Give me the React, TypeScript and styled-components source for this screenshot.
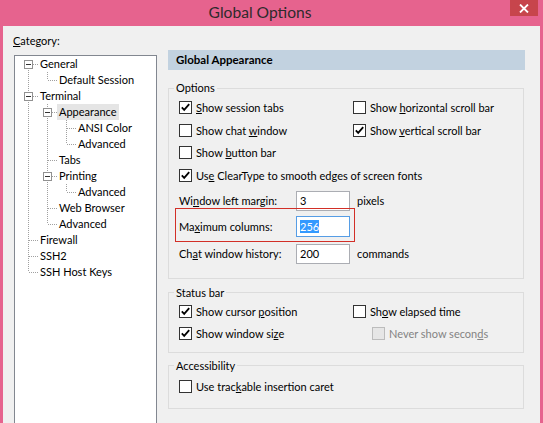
import React from 'react';
import styled, { createGlobalStyle } from 'styled-components';

const GlobalStyle = createGlobalStyle`
  html, body {
    margin: 0;
    padding: 0;
  }

  body {
    background: #e6638e;
    font-family: Lato, "Noto Sans", sans-serif;
    font-size: 11px;
    color: #000;
  }
`;

const Window = styled.div`
  width: 543px;
  height: 423px;
  overflow: hidden;
  background: #e6638e;
  display: flex;
  flex-direction: column;
`;

const TitleBar = styled.div`
  height: 26px;
  flex-shrink: 0;
  display: grid;
  grid-template-columns: 1fr auto;
`;

const Title = styled.div`
  padding-left: 10px;
  text-align: center;
  font-size: 15.6px;
  line-height: 24px;
  color: #2e2a2c;
`;

const CloseButton = styled.div`
  width: 28px;
  height: 16px;
  margin-right: 5px;
  background: #c7454c;
  display: flex;
  align-items: center;
  justify-content: center;
`;

const Body = styled.div`
  flex: 1;
  min-height: 0;
  margin: 0 3px;
  background: #f0f0f0;
  display: flex;
`;

const Sidebar = styled.div`
  width: 143px;
  padding-left: 11px;
  display: flex;
  flex-direction: column;
  flex-shrink: 0;
`;

const CategoryLabel = styled.div`
  margin: 7px 0 7px -1px;
  line-height: 15px;
`;

const Tree = styled.div`
  height: 380px;
  flex-shrink: 0;
  background: #fff;
  border: 1px solid #828790;
  padding: 0 0 0 4px;
`;

const TreeRow = styled.div`
  display: flex;
  height: 16px;
  align-items: center;
`;

const TreeLabel = styled.span<{ $selected?: boolean }>`
  padding: 0 2px;
  line-height: 16px;
  white-space: nowrap;
  background: ${(p) => (p.$selected ? '#e5e5e5' : 'transparent')};
`;

const Main = styled.div`
  flex: 1;
  min-width: 0;
  padding: 24px 15px 0 11px;
  display: flex;
  flex-direction: column;
`;

const Header = styled.div`
  height: 20px;
  background: #c2d2e0;
  padding-left: 8px;
  font-weight: 700;
  font-size: 11.5px;
  line-height: 20px;
`;

const Group = styled.fieldset<{ $mt: number }>`
  margin: ${(p) => p.$mt}px 1px 0 0;
  padding: 0;
  border: 1px solid #dcdcdc;
  min-width: 0;
`;

const Legend = styled.legend`
  margin-left: 5px;
  padding: 0 2px;
  line-height: 14px;
`;

const GroupContent = styled.div<{ $pt: number; $pb: number }>`
  padding: ${(p) => p.$pt}px 0 ${(p) => p.$pb}px 10px;
`;

const CheckGrid = styled.div<{ $rowH: number }>`
  display: grid;
  grid-template-columns: 174px 1fr;
  grid-auto-rows: ${(p) => p.$rowH}px;
  align-items: center;
`;

const CheckLabel = styled.label<{ $disabled?: boolean; $indent?: number; $span?: boolean }>`
  display: flex;
  align-items: center;
  gap: 4px;
  margin-left: ${(p) => p.$indent ?? 0}px;
  color: ${(p) => (p.$disabled ? '#838383' : '#000')};
  grid-column: ${(p) => (p.$span ? '1 / span 2' : 'auto')};
  white-space: nowrap;
`;

const Box = styled.span<{ $disabled?: boolean }>`
  width: 13px;
  height: 13px;
  box-sizing: border-box;
  border: 1px solid ${(p) => (p.$disabled ? '#bcbcbc' : '#333')};
  background: ${(p) => (p.$disabled ? '#e6e6e6' : '#fff')};
  display: flex;
  flex-shrink: 0;
`;

const FieldRow = styled.div<{ $mt: number; $highlight?: boolean }>`
  display: grid;
  grid-template-columns: ${(p) => (p.$highlight ? '110px 54px' : '110px 54px auto')};
  column-gap: 7px;
  align-items: center;
  width: max-content;
  margin-top: ${(p) => p.$mt}px;
  position: relative;

  &::after {
    content: '';
    display: ${(p) => (p.$highlight ? 'block' : 'none')};
    position: absolute;
    top: -8px;
    bottom: -5px;
    left: -4px;
    right: -5px;
    border: 1.5px solid #d22f27;
  }
`;

const TextBox = styled.div<{ $focused?: boolean; $h: number }>`
  height: ${(p) => p.$h}px;
  box-sizing: border-box;
  border: 1px solid ${(p) => (p.$focused ? '#569de5' : '#abadb3')};
  background: #fff;
  padding: 0 3px;
  display: flex;
  align-items: center;
`;

const Selected = styled.span`
  background: #3399ff;
  color: #fff;
`;

type TreeNode = {
  label: string;
  guides: boolean[];
  up: boolean;
  down: boolean;
  expander?: boolean;
  selected?: boolean;
};

const nodes: TreeNode[] = [
  { label: 'General', guides: [], up: false, down: true, expander: true },
  { label: 'Default Session', guides: [true], up: true, down: false },
  { label: 'Terminal', guides: [], up: true, down: true, expander: true },
  { label: 'Appearance', guides: [true], up: true, down: true, expander: true, selected: true },
  { label: 'ANSI Color', guides: [true, true], up: true, down: true },
  { label: 'Advanced', guides: [true, true], up: true, down: false },
  { label: 'Tabs', guides: [true], up: true, down: true },
  { label: 'Printing', guides: [true], up: true, down: true, expander: true },
  { label: 'Advanced', guides: [true, true], up: true, down: false },
  { label: 'Web Browser', guides: [true], up: true, down: true },
  { label: 'Advanced', guides: [true], up: true, down: false },
  { label: 'Firewall', guides: [], up: true, down: true },
  { label: 'SSH2', guides: [], up: true, down: true },
  { label: 'SSH Host Keys', guides: [], up: true, down: false },
];

const DOT = '#a0a0a0';

const LineCell = styled.svg`
  flex-shrink: 0;
`;

const Guide = ({ pipe }: { pipe: boolean }) => (
  <LineCell width="19" height="16">
    {pipe && <line x1="9.5" y1="0" x2="9.5" y2="16" stroke={DOT} strokeDasharray="1 1" />}
  </LineCell>
);

const Connector = ({ up, down, expander }: { up: boolean; down: boolean; expander?: boolean }) => (
  <LineCell width="19" height="16">
    {up && <line x1="9.5" y1="0" x2="9.5" y2="8" stroke={DOT} strokeDasharray="1 1" />}
    {down && <line x1="9.5" y1="8" x2="9.5" y2="16" stroke={DOT} strokeDasharray="1 1" />}
    <line x1="10" y1="8.5" x2="19" y2="8.5" stroke={DOT} strokeDasharray="1 1" />
    {expander && (
      <>
        <rect x="5.5" y="4.5" width="8" height="8" fill="#fff" stroke="#919191" />
        <line x1="7" y1="8.5" x2="12" y2="8.5" stroke="#333" />
      </>
    )}
  </LineCell>
);

const Check = ({
  checked,
  disabled,
  indent,
  span,
  children,
}: {
  checked?: boolean;
  disabled?: boolean;
  indent?: number;
  span?: boolean;
  children: React.ReactNode;
}) => (
  <CheckLabel $disabled={disabled} $indent={indent} $span={span}>
    <Box $disabled={disabled}>
      {checked && (
        <svg width="11" height="11" viewBox="0 0 11 11">
          <path d="M1.8 5.4 L4.2 7.9 L9.2 2.2" fill="none" stroke="#000" strokeWidth="1.8" />
        </svg>
      )}
    </Box>
    <span>{children}</span>
  </CheckLabel>
);

const App: React.FC = () => {
  return (
    <Window>
      <GlobalStyle />
      <TitleBar>
        <Title>Global Options</Title>
        <CloseButton>
          <svg width="10" height="9" viewBox="0 0 10 9">
            <path d="M1 0.5 L9 8.5 M9 0.5 L1 8.5" stroke="#fff" strokeWidth="1.8" />
          </svg>
        </CloseButton>
      </TitleBar>

      <Body>
        <Sidebar>
          <CategoryLabel>
            <u>C</u>ategory:
          </CategoryLabel>
          <Tree>
            {nodes.map((n, i) => (
              <TreeRow key={i}>
                {n.guides.map((g, j) => (
                  <Guide key={j} pipe={g} />
                ))}
                <Connector up={n.up} down={n.down} expander={n.expander} />
                <TreeLabel $selected={n.selected}>{n.label}</TreeLabel>
              </TreeRow>
            ))}
          </Tree>
        </Sidebar>

        <Main>
          <Header>Global Appearance</Header>

          <Group $mt={11}>
            <Legend>Options</Legend>
            <GroupContent $pt={1} $pb={14}>
              <CheckGrid $rowH={22.7}>
                <Check checked>
                  <u>S</u>how session tabs
                </Check>
                <Check>
                  Show <u>h</u>orizontal scroll bar
                </Check>
                <Check>
                  Show chat <u>w</u>indow
                </Check>
                <Check checked>
                  Show <u>v</u>ertical scroll bar
                </Check>
                <Check span>
                  Show <u>b</u>utton bar
                </Check>
                <Check checked span>
                  Us<u>e</u> ClearType to smooth edges of screen fonts
                </Check>
              </CheckGrid>

              <FieldRow $mt={4}>
                <span>
                  Wi<u>n</u>dow left margin:
                </span>
                <TextBox $h={20}>3</TextBox>
                <span>pixels</span>
              </FieldRow>
              <FieldRow $mt={5} $highlight>
                <span>
                  Ma<u>x</u>imum columns:
                </span>
                <TextBox $h={21} $focused>
                  <Selected>256</Selected>
                </TextBox>
              </FieldRow>
              <FieldRow $mt={7}>
                <span>
                  Ch<u>a</u>t window history:
                </span>
                <TextBox $h={20}>200</TextBox>
                <span>commands</span>
              </FieldRow>
            </GroupContent>
          </Group>

          <Group $mt={7}>
            <Legend>Status bar</Legend>
            <GroupContent $pt={1} $pb={7}>
              <CheckGrid $rowH={22}>
                <Check checked>
                  Show cursor <u>p</u>osition
                </Check>
                <Check>
                  Sh<u>o</u>w elapsed time
                </Check>
                <Check checked>
                  Show window si<u>z</u>e
                </Check>
                <Check disabled indent={19}>
                  Never show secon<u>d</u>s
                </Check>
              </CheckGrid>
            </GroupContent>
          </Group>

          <Group $mt={6}>
            <Legend>Accessibility</Legend>
            <GroupContent $pt={3} $pb={10}>
              <CheckGrid $rowH={22}>
                <Check span>
                  Use trac<u>k</u>able insertion caret
                </Check>
              </CheckGrid>
            </GroupContent>
          </Group>
        </Main>
      </Body>
    </Window>
  );
};

export default App;
